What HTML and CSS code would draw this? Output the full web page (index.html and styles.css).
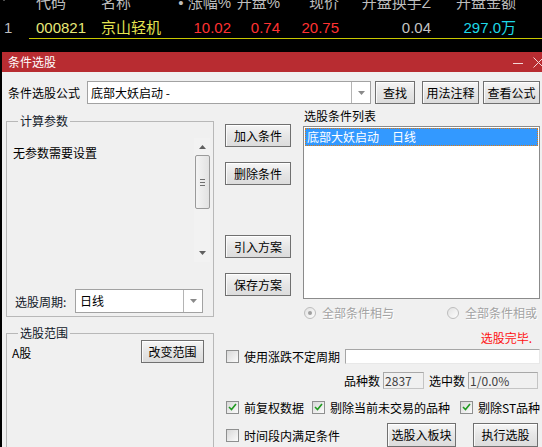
FILE: index.html
```html
<!DOCTYPE html>
<html lang="zh-CN">
<head>
<meta charset="utf-8">
<title>条件选股</title>
<link rel="stylesheet" href="styles.css">
</head>
<body>
<div class="quote">
  <div class="qrow qhead">
    <span class="c0"><svg class="sort-tri" width="8" height="5" viewBox="0 0 8 5"><polygon points="0,0 8,0 4,5" fill="#bdbdbd"/></svg></span>
    <span class="c-code">代码</span>
    <span class="c-name">名称</span>
    <span class="c-zf">•&nbsp;涨幅%</span>
    <span class="c-kp">开盘%</span>
    <span class="c-price">现价</span>
    <span class="c-hs">开盘换手Z</span>
    <span class="c-amt">开盘金额</span>
  </div>
  <div class="qrow qdata">
    <span class="c0">1</span>
    <span class="c-code q-yellow">000821</span>
    <span class="c-name q-name">京山轻机</span>
    <span class="c-zf q-red">10.02</span>
    <span class="c-kp q-red">0.74</span>
    <span class="c-price q-red">20.75</span>
    <span class="c-hs q-gray">0.04</span>
    <span class="c-amt q-cyan">297.0万</span>
  </div>
  <div class="qline"></div>
</div>

<div class="dialog">
  <div class="titlebar">
    <span class="title">条件选股</span>
    <span class="tb-controls">
      <svg width="10" height="10" viewBox="0 0 10 10"><line x1="0" y1="5.5" x2="10" y2="5.5" stroke="#f3d6d7" stroke-width="1"/></svg>
      <svg width="11" height="11" viewBox="0 0 11 11"><line x1="0.5" y1="0.5" x2="10.5" y2="10.5" stroke="#f3d6d7" stroke-width="1"/><line x1="10.5" y1="0.5" x2="0.5" y2="10.5" stroke="#f3d6d7" stroke-width="1"/></svg>
    </span>
  </div>

  <div class="dlg-body">
    <div class="formula-row">
      <span class="formula-label">条件选股公式</span>
      <div class="combo combo-formula">
        <span class="combo-text">底部大妖启动 -</span>
        <span class="combo-drop"><svg width="7" height="4" viewBox="0 0 7 4"><polygon points="0,0 7,0 3.5,4" fill="#8a8a8a"/></svg></span>
      </div>
      <button class="btn btn-find">查找</button>
      <button class="btn btn-usage">用法注释</button>
      <button class="btn btn-view">查看公式</button>
    </div>

    <div class="main">
      <div class="left">
        <fieldset class="group g-params">
          <legend>计算参数</legend>
          <div class="param-panel">
            <span class="param-text">无参数需要设置</span>
            <div class="vscroll">
              <svg class="sc-arrow" width="7" height="4" viewBox="0 0 7 4"><polygon points="0,4 7,4 3.5,0" fill="#606060"/></svg>
              <div class="sc-thumb">
                <span class="grip"></span><span class="grip"></span><span class="grip"></span>
              </div>
              <div class="sc-track"></div>
              <svg class="sc-arrow" width="7" height="4" viewBox="0 0 7 4"><polygon points="0,0 7,0 3.5,4" fill="#606060"/></svg>
            </div>
          </div>
          <div class="period-row">
            <span class="period-label">选股周期:</span>
            <div class="combo combo-period">
              <span class="combo-text">日线</span>
              <span class="combo-drop"><svg width="7" height="4" viewBox="0 0 7 4"><polygon points="0,0 7,0 3.5,4" fill="#8a8a8a"/></svg></span>
            </div>
          </div>
        </fieldset>

        <fieldset class="group g-range">
          <legend>选股范围</legend>
          <div class="range-row">
            <span class="range-text">A股</span>
            <button class="btn btn-range">改变范围</button>
          </div>
        </fieldset>
      </div>

      <div class="right">
        <div class="right-top">
          <div class="btn-col">
            <button class="btn btn-side b-add">加入条件</button>
            <button class="btn btn-side b-del">删除条件</button>
            <button class="btn btn-side b-imp">引入方案</button>
            <button class="btn btn-side b-save">保存方案</button>
          </div>
          <div class="list-col">
            <div class="list-label">选股条件列表</div>
            <div class="listbox">
              <div class="list-item sel">底部大妖启动<span class="li-period">日线</span></div>
            </div>
          </div>
        </div>

        <div class="lower">
          <div class="radio-row">
            <span class="radio r-and checked"><span class="dot"></span></span>
            <span class="disabled-text">全部条件相与</span>
            <span class="radio r-or"></span>
            <span class="disabled-text">全部条件相或</span>
          </div>
          <div class="status-row"><span class="status">选股完毕.</span></div>
          <div class="use-row">
            <span class="cb"></span>
            <span class="cb-label">使用涨跌不定周期</span>
            <span class="textbox"></span>
          </div>
          <div class="count-row">
            <span>品种数</span>
            <span class="countbox cb-total">2837</span>
            <span class="count-sel-label">选中数</span>
            <span class="countbox cb-sel">1/0.0%</span>
          </div>
          <div class="check-row">
            <span class="cb checked"><svg width="9" height="8" viewBox="0 0 9 8"><polyline points="1,4 3.5,6.5 8,1" fill="none" stroke="#1f9a1f" stroke-width="1.6"/></svg></span>
            <span class="cb-label">前复权数据</span>
            <span class="cb checked cb-2"><svg width="9" height="8" viewBox="0 0 9 8"><polyline points="1,4 3.5,6.5 8,1" fill="none" stroke="#1f9a1f" stroke-width="1.6"/></svg></span>
            <span class="cb-label">剔除当前未交易的品种</span>
            <span class="cb checked cb-3"><svg width="9" height="8" viewBox="0 0 9 8"><polyline points="1,4 3.5,6.5 8,1" fill="none" stroke="#1f9a1f" stroke-width="1.6"/></svg></span>
            <span class="cb-label">剔除ST品种</span>
          </div>
          <div class="final-row">
            <span class="cb"></span>
            <span class="cb-label">时间段内满足条件</span>
            <button class="btn btn-block">选股入板块</button>
            <button class="btn btn-run">执行选股</button>
          </div>
        </div>
      </div>
    </div>
  </div>
</div>
</body>
</html>
```

FILE: styles.css
```css
html, body {
  margin: 0;
  padding: 0;
}
body {
  width: 542px;
  height: 447px;
  overflow: hidden;
  background: #000;
}

/* ---------- quote strip ---------- */
.quote {
  display: flow-root;
  height: 52px;
  overflow: hidden;
  background: #000;
  color: #bdbdbd;
  font-family: "Liberation Sans", "Noto Sans CJK SC", sans-serif;
  font-size: 15px;
}
.qrow {
  display: flex;
  white-space: nowrap;
  line-height: 18px;
}
.qhead {
  margin-top: -6px;
  height: 18px;
}
.qdata {
  margin-top: 7px;
  height: 19px;
}
.qline {
  margin-left: 29px;
  height: 1px;
  background: #c8c800;
}
.c0 { width: 25px; padding-left: 4px; }
.sort-tri { display: inline-block; margin-left: -4px; vertical-align: 7px; }
.c-code { width: 61px; padding-left: 7px; }
.c-name { width: 71px; padding-left: 4px; }
.c-zf { width: 59px; text-align: right; }
.c-kp { width: 49px; text-align: right; }
.c-price { width: 59px; text-align: right; }
.c-hs { width: 92px; text-align: right; }
.c-amt { width: 85px; text-align: right; }
.q-yellow { color: #e8e878; }
.q-name { color: #e4e450; }
.q-red { color: #ff3232; }
.q-gray { color: #c4c4c4; }
.q-cyan { color: #1ed8e8; }

/* ---------- dialog ---------- */
.dialog {
  display: flow-root;
  margin-left: 2px;
  height: 395px;
  overflow: hidden;
  background: #f0f0f0;
  font-family: "Noto Sans CJK SC", "Liberation Sans", sans-serif;
  font-size: 12px;
  color: #000;
}
.titlebar {
  height: 20px;
  background: #b82c31;
  display: flex;
  align-items: center;
  justify-content: space-between;
}
.title {
  color: #fff;
  padding-left: 6px;
  line-height: 20px;
}
.tb-controls {
  display: flex;
  align-items: center;
  gap: 10px;
  padding-top: 1px;
  margin-right: -2px;
}

.dlg-body {
  padding: 9px 0 0 4px;
}

/* buttons */
.btn {
  box-sizing: border-box;
  height: 23px;
  padding: 0;
  border: 1px solid #707070;
  background: linear-gradient(#f6f6f6, #e6e6e6 50%, #dcdcdc);
  box-shadow: inset 0 1px 0 #fff, inset 1px 0 0 #fafafa;
  font-family: "Noto Sans CJK SC", "Liberation Sans", sans-serif;
  font-size: 12px;
  line-height: 20px;
  color: #000;
  text-align: center;
}

/* formula row */
.formula-row {
  display: flex;
  align-items: center;
  height: 23px;
  margin-left: 2px;
}
.formula-label { width: 79px; }
.combo {
  box-sizing: border-box;
  display: flex;
  background: #fff;
  border: 1px solid #a2a2a2;
}
.combo-text {
  flex: 1;
  padding-left: 3px;
  line-height: 21px;
  white-space: nowrap;
}
.combo-drop {
  width: 18px;
  border-left: 1px solid #b4b4b4;
  display: flex;
  align-items: center;
  justify-content: center;
}
.combo-formula { width: 284px; height: 23px; }
.btn-find { width: 40px; margin-left: 4px; }
.btn-usage { width: 57px; margin-left: 7px; }
.btn-view { width: 57px; margin-left: 4px; }

/* main grid */
.main {
  display: grid;
  grid-template-columns: 208px 1fr;
}

.group {
  margin: 0;
  padding: 0;
  border: 1px solid #b8b8b8;
  min-width: 0;
}
.group legend {
  margin-left: 6px;
  padding: 0 2px;
  line-height: 16px;
  color: #101828;
}
.g-params {
  margin-top: 9px;
  padding: 0 3px 3px 5px;
}
.param-panel {
  margin-top: 9px;
  height: 124px;
  display: flex;
  justify-content: space-between;
}
.param-text {
  padding: 7px 0 0 1px;
  line-height: 16px;
}
.vscroll {
  width: 16px;
  display: flex;
  flex-direction: column;
  align-items: center;
  background: #f2f2f2;
}
.sc-arrow { margin: 7px 0 6px; flex: none; }
.sc-arrow:last-child { margin: 6px 0 7px; }
.sc-thumb {
  box-sizing: border-box;
  width: 15px;
  height: 54px;
  border: 1px solid #9a9a9a;
  border-radius: 2px;
  background: linear-gradient(90deg, #f4f4f4, #e2e2e2);
  display: flex;
  flex-direction: column;
  align-items: center;
  justify-content: center;
  gap: 2px;
}
.grip {
  width: 5px;
  height: 1px;
  background: #707070;
}
.sc-track { flex: 1; }

.period-row {
  margin-top: 27px;
  height: 24px;
  display: flex;
  align-items: center;
}
.period-label {
  width: 60px;
  padding-left: 3px;
  color: #101828;
}
.combo-period { width: 128px; height: 24px; }
.combo-period .combo-text { line-height: 22px; padding-left: 4px; }

.g-range {
  margin-top: 8px;
  height: 140px;
  padding: 0 9px 0 5px;
}
.range-row {
  display: flex;
  justify-content: space-between;
  align-items: flex-start;
}
.range-text {
  margin-top: 4px;
  line-height: 16px;
}
.btn-range {
  width: 63px;
  margin-top: -1px;
}

/* right side */
.right-top {
  display: flex;
  height: 195px;
}
.btn-col {
  margin-left: 11px;
  width: 66px;
  padding-top: 20px;
  display: flex;
  flex-direction: column;
}
.btn-side { width: 66px; flex: none; }
.b-del { margin-top: 15px; }
.b-imp { margin-top: 50px; }
.b-save { margin-top: 15px; }

.list-col {
  margin-left: 12px;
  width: 237px;
}
.list-label {
  margin-top: 4px;
  padding-left: 1px;
  line-height: 16px;
}
.listbox {
  box-sizing: border-box;
  margin-top: 2px;
  height: 173px;
  background: #fff;
  border: 1px solid #8b8b8b;
  padding: 1px;
}
.list-item {
  box-sizing: border-box;
  height: 18px;
  line-height: 16px;
  padding-left: 1px;
  white-space: nowrap;
}
.list-item.sel {
  background: #3399ff;
  color: #fff;
  border: 1px dotted #e07a10;
}
.li-period { margin-left: 13px; }

.lower {
  padding: 0 2px 0 12px;
  display: flex;
  flex-direction: column;
}
.radio-row {
  height: 27px;
  display: flex;
  align-items: center;
}
.radio {
  box-sizing: border-box;
  width: 12px;
  height: 12px;
  border-radius: 50%;
  border: 1px solid #bdbdbd;
  background: linear-gradient(135deg, #e2e2e2, #fdfdfd);
  display: flex;
  align-items: center;
  justify-content: center;
  margin-right: 6px;
}
.r-and { margin-left: 78px; }
.r-or { margin-left: 53px; }
.dot {
  width: 4px;
  height: 4px;
  border-radius: 50%;
  background: #a0a0a0;
}
.disabled-text {
  color: #a3a3a3;
  text-shadow: 1px 1px 0 #fff;
}
.status-row {
  height: 22px;
  display: flex;
  align-items: center;
  justify-content: flex-end;
  padding-right: 8px;
}
.status { color: #ff1010; }

.cb {
  box-sizing: border-box;
  width: 13px;
  height: 13px;
  flex: none;
  border: 1px solid #8e8f8f;
  background: linear-gradient(135deg, #d8d8d8, #fbfbfb);
  display: flex;
  align-items: center;
  justify-content: center;
}
.cb-label {
  margin-left: 5px;
  white-space: nowrap;
}
.use-row {
  height: 16px;
  display: flex;
  align-items: center;
}
.textbox {
  box-sizing: border-box;
  flex: 1;
  height: 15px;
  margin-left: 5px;
  background: #fff;
  border: 1px solid #a6a6a6;
  border-right-color: #e8e8e8;
  border-bottom-color: #e8e8e8;
}
.count-row {
  height: 32px;
  display: flex;
  align-items: center;
  justify-content: flex-end;
  padding-right: 2px;
  white-space: nowrap;
}
.countbox {
  box-sizing: border-box;
  height: 17px;
  line-height: 15px;
  margin-left: 3px;
  padding-left: 1px;
  color: #404040;
  border: 1px solid #c4c4c4;
  border-top-color: #a8a8a8;
  border-left-color: #a8a8a8;
  background: #f0f0f0;
}
.cb-total { width: 41px; }
.cb-sel { width: 70px; }
.count-sel-label { margin-left: 5px; }

.check-row {
  height: 22px;
  display: flex;
  align-items: center;
}
.cb-2 { margin-left: 8px; }
.cb-3 { margin-left: 10px; }

.final-row {
  height: 30px;
  padding: 2px 2px 0 0;
  display: flex;
  align-items: center;
}
.btn-block {
  width: 69px;
  height: 24px;
  margin-left: auto;
}
.btn-run {
  width: 65px;
  height: 24px;
  margin-left: 17px;
}
```
